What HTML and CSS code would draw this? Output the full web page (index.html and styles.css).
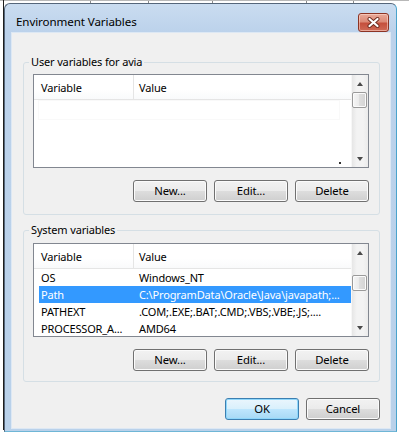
FILE: index.html
```html
<!DOCTYPE html>
<html>
<head>
<meta charset="utf-8">
<title>Environment Variables</title>
<link rel="stylesheet" href="styles.css">
</head>
<body>
<div class="bg-strip">
  <span class="tab t1"></span><span class="tab t2"></span><span class="tab t3"></span><span class="tab t4"></span><span class="tab t5"></span><span class="tab t6"></span>
</div>
<div class="stage">
  <div class="behind"></div>
  <div class="window">
    <div class="titlebar">
      <span class="title">Environment Variables</span>
      <button class="close" aria-label="Close">
        <svg width="13" height="11" viewBox="0 0 13 11">
          <path d="M2.5 2 L10.5 9 M10.5 2 L2.5 9" stroke="#6e2a1e" stroke-width="4" stroke-linecap="round"/>
          <path d="M2.5 2 L10.5 9 M10.5 2 L2.5 9" stroke="#ffffff" stroke-width="2.2" stroke-linecap="round"/>
        </svg>
      </button>
    </div>
    <div class="client">
      <fieldset class="group group-user">
        <legend>User variables for avia</legend>
        <div class="listview">
          <div class="lv-main">
            <div class="lv-header">
              <span class="hcell hvar">Variable</span>
              <span class="hcell hval">Value</span>
            </div>
            <div class="lv-rows lv-empty">
              <div class="empty-row"></div>
              <span class="dot"></span>
            </div>
          </div>
          <div class="scrollbar">
            <span class="sb-btn"><span class="arrow-up"></span></span>
            <span class="sb-track"><span class="thumb"></span></span>
            <span class="sb-btn"><span class="arrow-down"></span></span>
          </div>
        </div>
        <div class="btn-row">
          <button class="btn">New...</button>
          <button class="btn">Edit...</button>
          <button class="btn">Delete</button>
        </div>
      </fieldset>

      <fieldset class="group group-sys">
        <legend>System variables</legend>
        <div class="listview">
          <div class="lv-main">
            <div class="lv-header">
              <span class="hcell hvar">Variable</span>
              <span class="hcell hval">Value</span>
            </div>
            <div class="lv-rows">
              <div class="row"><span class="cvar">OS</span><span class="cval">Windows_NT</span></div>
              <div class="row selected"><span class="cvar">Path</span><span class="cval">C:\ProgramData\Oracle\Java\javapath;...</span></div>
              <div class="row"><span class="cvar">PATHEXT</span><span class="cval">.COM;.EXE;.BAT;.CMD;.VBS;.VBE;.JS;....</span></div>
              <div class="row"><span class="cvar">PROCESSOR_A...</span><span class="cval">AMD64</span></div>
            </div>
          </div>
          <div class="scrollbar">
            <span class="sb-btn"><span class="arrow-up"></span></span>
            <span class="sb-track sys-track"><span class="thumb"></span></span>
            <span class="sb-btn"><span class="arrow-down"></span></span>
          </div>
        </div>
        <div class="btn-row">
          <button class="btn">New...</button>
          <button class="btn">Edit...</button>
          <button class="btn">Delete</button>
        </div>
      </fieldset>

      <div class="dlg-buttons">
        <button class="btn btn-default">OK</button>
        <button class="btn">Cancel</button>
      </div>
    </div>
  </div>
</div>
</body>
</html>
```

FILE: styles.css
```css
* { box-sizing: border-box; }

html, body {
  margin: 0;
  padding: 0;
}

body {
  width: 409px;
  height: 442px;
  overflow: hidden;
  background: #ffffff;
  font-family: "Noto Sans", "Open Sans", sans-serif;
  font-size: 11px;
  letter-spacing: -0.15px;
  color: #000;
}

/* background window fragments */
.bg-strip {
  display: flex;
  height: 3px;
  border-top: 1px solid #b8b8b8;
}
.tab {
  height: 3px;
  border-right: 1px solid #8a8a8a;
}
.t1 { width: 91px; }
.t2 { width: 58px; }
.t3 { width: 64px; }
.t4 { width: 94px; }
.t5 { width: 47px; }
.t6 { flex: 1; border-right: none; }

.stage {
  display: flex;
  align-items: flex-start;
}
.behind {
  width: 4px;
  height: 430px;
  border-right: 1px solid #1e1e1e;
  margin-top: -3px;
}

/* window frame */
.window {
  width: 393px;
  height: 429px;
  border: 1px solid #55667a;
  border-right-color: #4aa3cc;
  border-bottom-color: #6fb6d6;
  border-radius: 6px 6px 0 0;
  background: linear-gradient(#cadcf0 0px, #bcd2eb 28px, #b9d1ea 100%);
  padding: 0 6px 3px 7px;
  display: flex;
  flex-direction: column;
}

.titlebar {
  height: 29px;
  display: flex;
  justify-content: space-between;
  align-items: flex-start;
}
.title {
  margin-top: 10px;
  margin-left: 4px;
  line-height: 16px;
  font-size: 11.6px;
  letter-spacing: -0.1px;
  color: #000;
}
.close {
  margin-top: 9px;
  margin-right: 1px;
  width: 31px;
  height: 19px;
  padding: 0;
  border: 1px solid #8c3424;
  border-radius: 3px;
  background: linear-gradient(#e9a999 0%, #dc8a77 45%, #c5503d 55%, #cf6a56 100%);
  box-shadow: inset 0 0 0 1px rgba(255, 220, 210, 0.55);
  display: flex;
  align-items: center;
  justify-content: center;
}

.client {
  height: 395px;
  background: #f0f0f0;
  box-shadow: 0 0 0 1px #dde8f4;
  padding: 21px 10px 0 11px;
  display: flex;
  flex-direction: column;
}

/* group boxes */
.group {
  margin: 0;
  border: 1px solid #d5dfe5;
  border-radius: 3px;
  padding: 4px 10px 12px 9px;
  min-width: 0;
}
.group legend {
  padding: 0 2px;
  margin-left: -4px;
  line-height: 16px;
}
.group-sys {
  margin-top: 7px;
  padding-top: 5px;
  padding-bottom: 10px;
}

/* list views */
.listview {
  height: 94px;
  border: 1px solid #828790;
  background: #ffffff;
  display: flex;
  overflow: hidden;
}
.lv-main {
  flex: 1;
  display: flex;
  flex-direction: column;
  position: relative;
}
.lv-header {
  height: 25px;
  display: flex;
  border-bottom: 1px solid #e5e5e5;
  background: linear-gradient(#ffffff, #ffffff 60%, #f9fafb);
}
.hcell {
  line-height: 24px;
  padding-top: 1px;
}
.hvar {
  width: 100px;
  padding-left: 7px;
  border-right: 1px solid #e5e5e5;
}
.hval {
  flex: 1;
  padding-left: 5px;
}

.lv-rows {
  flex: 1;
  display: flex;
  flex-direction: column;
}
.empty-row {
  height: 18px;
  margin: 1px 12px 0 5px;
  background: #ffffff;
  box-shadow: 0 0 0 1px #f9f9f9;
}
.dot {
  position: absolute;
  left: 305px;
  bottom: 3px;
  width: 2px;
  height: 2px;
  background: #333;
}
.row {
  height: 17px;
  margin-left: 5px;
  display: flex;
  line-height: 17px;
  white-space: nowrap;
  overflow: hidden;
}
.row.selected {
  background: #3399ff;
  color: #ffffff;
}
.cvar {
  width: 95px;
  padding-left: 2px;
  overflow: hidden;
}
.cval {
  flex: 1;
  padding-left: 5px;
  overflow: hidden;
}

/* scrollbars */
.scrollbar {
  width: 17px;
  display: flex;
  flex-direction: column;
  background: linear-gradient(to right, #e6e6e6, #f3f3f3 30%, #f3f3f3 70%, #ebebeb);
  border-left: 1px solid #f7f7f7;
}
.sb-btn {
  height: 17px;
  display: flex;
  align-items: center;
  justify-content: center;
}
.sb-track {
  flex: 1;
  padding-top: 0;
}
.sys-track {
  padding-top: 14px;
}
.thumb {
  display: block;
  width: 15px;
  height: 16px;
  margin-left: 0;
  border: 1px solid #9a9a9a;
  border-radius: 2px;
  background: linear-gradient(to right, #f5f5f5, #eaeaea 50%, #dedede 50%, #d3d3d3);
  box-shadow: inset 0 0 0 1px #fbfbfb;
}
.arrow-up {
  width: 0;
  height: 0;
  border-left: 3.5px solid transparent;
  border-right: 3.5px solid transparent;
  border-bottom: 4px solid #4a4a4a;
}
.arrow-down {
  width: 0;
  height: 0;
  border-left: 3.5px solid transparent;
  border-right: 3.5px solid transparent;
  border-top: 4px solid #4a4a4a;
}

/* buttons */
.btn-row {
  margin-top: 12px;
  display: flex;
  justify-content: flex-end;
  gap: 7px;
}
.btn {
  width: 74px;
  height: 22px;
  padding: 0;
  border: 1px solid #707070;
  border-radius: 3px;
  background: linear-gradient(#f2f2f2 0%, #ebebeb 49%, #dddddd 51%, #cfcfcf 100%);
  box-shadow: inset 0 0 0 1px #fbfbfb;
  font-family: inherit;
  font-size: 11.3px;
  letter-spacing: inherit;
  color: #000;
  line-height: 20px;
}
.btn-default {
  border-color: #3c7fb1;
  background: linear-gradient(#eaf6fd 0%, #d9f0fc 49%, #bee6fd 51%, #a7d9f5 100%);
  box-shadow: inset 0 0 0 1px #8fd7fb;
}

.dlg-buttons {
  margin-top: 16px;
  display: flex;
  justify-content: flex-end;
  gap: 7px;
}
```
